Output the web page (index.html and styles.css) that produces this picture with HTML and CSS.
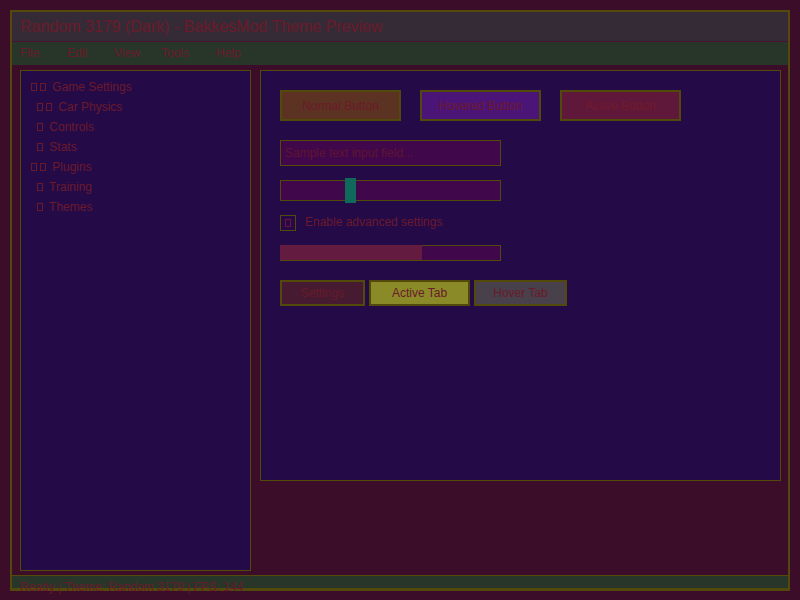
FILE: index.html
```html
<!DOCTYPE html>
<html lang="en">
<head>
<meta charset="utf-8">
<title>BakkesMod Theme Preview</title>
<link rel="stylesheet" href="styles.css">
</head>
<body>
<div class="window">
  <header class="titlebar">Random 3179 (Dark) - BakkesMod Theme Preview</header>
  <nav class="menubar">
    <span class="menu-item">File</span>
    <span class="menu-item">Edit</span>
    <span class="menu-item">View</span>
    <span class="menu-item menu-item--wide">Tools</span>
    <span class="menu-item">Help</span>
  </nav>
  <main class="main">
    <aside class="tree">
      <div class="tree-row"><span class="tofu"></span><span class="tofu"></span> Game Settings</div>
      <div class="tree-row tree-row--child"><span class="tofu"></span><span class="tofu"></span> Car Physics</div>
      <div class="tree-row tree-row--child"><span class="tofu"></span> Controls</div>
      <div class="tree-row tree-row--child"><span class="tofu"></span> Stats</div>
      <div class="tree-row"><span class="tofu"></span><span class="tofu"></span> Plugins</div>
      <div class="tree-row tree-row--child"><span class="tofu"></span> Training</div>
      <div class="tree-row tree-row--child"><span class="tofu"></span> Themes</div>
    </aside>
    <section class="preview">
      <div class="button-row">
        <div class="btn btn--normal">Normal Button</div>
        <div class="btn btn--hovered">Hovered Button</div>
        <div class="btn btn--active">Active Button</div>
      </div>
      <div class="text-input">Sample text input field...</div>
      <div class="slider"><span class="slider-thumb"></span></div>
      <div class="check-row">
        <span class="checkbox"><span class="tofu tofu--check"></span></span>
        <span class="check-label">Enable advanced settings</span>
      </div>
      <div class="progress"><span class="progress-fill" style="width: 65%"></span></div>
      <div class="tabs">
        <div class="tab tab--settings">Settings</div>
        <div class="tab tab--active">Active Tab</div>
        <div class="tab tab--hover">Hover Tab</div>
      </div>
    </section>
  </main>
  <footer class="statusbar">Ready | Theme: Random 3179 | FPS: 144</footer>
</div>
</body>
</html>
```
FILE: styles.css
```css
* { box-sizing: border-box; }

html, body {
  margin: 0;
  padding: 0;
  background: #3c0d28;
  font-family: "Liberation Sans", Arial, sans-serif;
  color: #6b1a2b;
  font-size: 12px;
}

.window {
  margin: 10px;
  height: 581px;
  border: 2px solid #52490a;
  display: flex;
  flex-direction: column;
}

.titlebar {
  height: 30px;
  background: #352b36;
  border-bottom: 1px solid #4a1230;
  padding-left: 8px;
  font-size: 16px;
  line-height: 29px;
}

.menubar {
  height: 23px;
  background: #283629;
  padding-left: 8px;
  display: flex;
  align-items: center;
  line-height: 23px;
}

.menu-item { width: 47px; }
.menu-item--wide { width: 55px; }

.main {
  flex: 1;
  display: flex;
  align-items: flex-start;
  gap: 9px;
  padding: 5px 7px 4px 8px;
}

.tree {
  width: 231px;
  height: 501px;
  background: #250a48;
  border: 1px solid #52490a;
  padding: 6px 0 0 10px;
}

.tree-row {
  height: 20px;
  line-height: 20px;
  white-space: nowrap;
}

.tree-row--child { padding-left: 6px; }

.tofu {
  display: inline-block;
  width: 6px;
  height: 8px;
  border: 1px solid currentColor;
  margin-right: 3px;
  vertical-align: baseline;
}

.preview {
  flex: 1;
  height: 411px;
  background: #250a48;
  border: 1px solid #52490a;
  padding: 19px;
  display: flex;
  flex-direction: column;
  align-items: flex-start;
}

.button-row {
  display: flex;
  gap: 19px;
  margin-bottom: 19px;
}

.btn {
  width: 121px;
  height: 31px;
  border: 2px solid #52490a;
  display: flex;
  align-items: center;
  justify-content: center;
}

.btn--normal { background: #5c3222; }
.btn--hovered { background: #4b1577; }
.btn--active { background: #5f173a; color: #731a2a; }

.text-input {
  width: 221px;
  height: 26px;
  border: 1px solid #52490a;
  background: #40084a;
  padding-left: 4px;
  line-height: 24px;
  color: #5f1532;
  margin-bottom: 14px;
}

.slider {
  position: relative;
  width: 221px;
  height: 21px;
  border: 1px solid #52490a;
  background: #40084a;
  margin-bottom: 14px;
}

.slider-thumb {
  position: absolute;
  left: 64px;
  top: -3px;
  width: 11px;
  height: 25px;
  background: #0f6a5c;
}

.check-row {
  display: flex;
  align-items: center;
  height: 16px;
  margin-bottom: 14px;
}

.check-label { margin-top: -2px; }

.checkbox {
  width: 16px;
  height: 16px;
  border: 1px solid #52490a;
  display: flex;
  align-items: center;
  justify-content: center;
  margin-right: 9px;
}

.tofu--check {
  color: #7c0f3c;
  margin-right: 0;
}

.progress {
  position: relative;
  width: 221px;
  height: 16px;
  border: 1px solid #52490a;
  background: #40084a;
  margin-bottom: 19px;
}

.progress-fill {
  position: absolute;
  left: -1px;
  top: -1px;
  bottom: 0;
  background: #631b40;
}

.tabs {
  display: flex;
  gap: 4px;
}

.tab {
  height: 26px;
  border: 2px solid #52490a;
  display: flex;
  align-items: center;
  justify-content: center;
}

.tab--settings { width: 85px; background: #461a30; color: #661a2c; }
.tab--active { width: 101px; background: #8a8a28; }
.tab--hover { width: 93px; background: #48404a; }

.statusbar {
  height: 14px;
  background: #283629;
  border-top: 1px solid #52490a;
  border-bottom: 1px solid #52490a;
  padding: 4px 0 0 8px;
  line-height: 14px;
  white-space: nowrap;
  overflow: visible;
}
```
